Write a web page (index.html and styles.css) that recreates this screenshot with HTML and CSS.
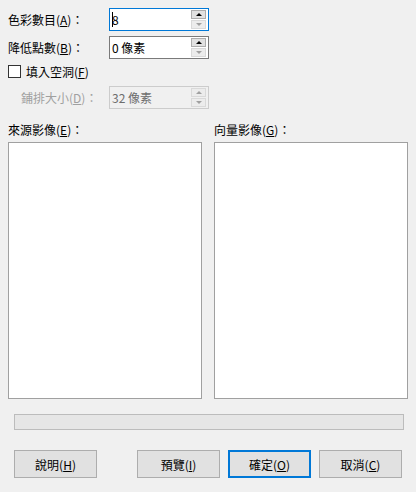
FILE: index.html
```html
<!DOCTYPE html>
<html lang="zh-Hant">
<head>
<meta charset="utf-8">
<link rel="stylesheet" href="styles.css">
</head>
<body>
<div class="dialog">
  <div class="row r1">
    <span class="lbl">色彩數目(<u>A</u>)：</span>
    <div class="spin focus">
      <span class="val"><span class="caret"></span>8</span>
      <div class="btns">
        <span class="sb"><span class="up"></span></span>
        <span class="sb off"><span class="dn"></span></span>
      </div>
    </div>
  </div>
  <div class="row r2">
    <span class="lbl">降低點數(<u>B</u>)：</span>
    <div class="spin">
      <span class="val">0 像素</span>
      <div class="btns">
        <span class="sb"><span class="up"></span></span>
        <span class="sb off"><span class="dn"></span></span>
      </div>
    </div>
  </div>
  <div class="row r3">
    <span class="check"></span>
    <span class="chklbl">填入空洞(<u>F</u>)</span>
  </div>
  <div class="row r4 disabled">
    <span class="lbl ind">鋪排大小(<u>D</u>)：</span>
    <div class="spin dis">
      <span class="val">32 像素</span>
      <div class="btns">
        <span class="sb off"><span class="up"></span></span>
        <span class="sb off"><span class="dn"></span></span>
      </div>
    </div>
  </div>
  <div class="panes">
    <div class="pane">
      <div class="plbl">來源影像(<u>E</u>)：</div>
      <div class="box"></div>
    </div>
    <div class="pane">
      <div class="plbl">向量影像(<u>G</u>)：</div>
      <div class="box"></div>
    </div>
  </div>
  <div class="progress"></div>
  <div class="buttons">
    <button class="btn">說明(<u>H</u>)</button>
    <div class="grow"></div>
    <button class="btn">預覽(<u>I</u>)</button>
    <button class="btn def">確定(<u>O</u>)</button>
    <button class="btn">取消(<u>C</u>)</button>
  </div>
</div>
</body>
</html>
```
FILE: styles.css
```css
* { box-sizing: border-box; }
html, body {
  margin: 0;
  background: #f0f0f0;
}
body {
  font-family: "Noto Sans CJK TC", "Noto Sans", sans-serif;
  font-size: 12px;
  color: #000;
  width: 416px;
  height: 492px;
  overflow: hidden;
}
u { text-decoration: underline; text-underline-offset: 1px; }
.dialog {
  padding: 8px 8px 0 8px;
}
.row {
  display: flex;
  align-items: center;
}
.r1, .r2, .r4 { height: 23px; }
.r1 { margin-bottom: 5px; }
.r2 { margin-bottom: 5px; }
.r3 { height: 14px; margin-bottom: 8px; }
.lbl {
  width: 101px;
  flex: none;
  white-space: nowrap;
}
.lbl.ind { padding-left: 13px; }
.disabled .lbl { color: #a0a0a0; }
.spin {
  width: 100px;
  height: 23px;
  border: 1px solid #7a7a7a;
  background: #fff;
  display: flex;
  align-items: center;
  padding: 0 2px 0 2px;
}
.spin.focus { border-color: #0078d7; }
.spin.dis { border-color: #cccccc; background: #f0f0f0; color: #6d6d6d; }
.val {
  flex: 1;
  display: flex;
  align-items: center;
  white-space: nowrap;
  line-height: 14px;
}
.caret {
  display: inline-block;
  width: 1px;
  height: 15px;
  background: #000;
  margin-right: -1px;
}
.btns {
  width: 15px;
  height: 19px;
  display: flex;
  flex-direction: column;
  gap: 1px;
}
.sb {
  flex: 1;
  background: #e1e1e1;
  border: 1px solid #adadad;
  display: flex;
  align-items: center;
  justify-content: center;
}
.sb.off { background: #ececec; border-color: #d9d9d9; }
.up, .dn {
  width: 0;
  height: 0;
  border-left: 3px solid transparent;
  border-right: 3px solid transparent;
}
.up { border-bottom: 3px solid #000; }
.dn { border-top: 3px solid #000; }
.off .up { border-bottom-color: #a0a0a0; }
.off .dn { border-top-color: #a0a0a0; }
.check {
  width: 13px;
  height: 13px;
  border: 1px solid #333;
  background: #fff;
  flex: none;
  margin-right: 5px;
}
.chklbl { white-space: nowrap; }
.panes {
  display: flex;
  gap: 12px;
  margin-top: 13px;
}
.pane { width: 194px; }
.plbl {
  height: 16px;
  line-height: 16px;
  margin-bottom: 4px;
  white-space: nowrap;
}
.box {
  height: 257px;
  background: #fff;
  border: 1px solid #a0a0a0;
}
.progress {
  margin: 15px 0 0 6px;
  width: 390px;
  height: 16px;
  background: #e6e6e6;
  border: 1px solid #bcbcbc;
}
.buttons {
  display: flex;
  gap: 8px;
  margin: 20px 0 0 6px;
  width: 388px;
}
.grow { flex: 1; }
.btn {
  width: 83px;
  height: 28px;
  background: #e1e1e1;
  border: 1px solid #adadad;
  font-family: inherit;
  font-size: 12px;
  color: #000;
  padding: 0;
  margin: 0;
}
.btn.def { border: 2px solid #0078d7; }
```
